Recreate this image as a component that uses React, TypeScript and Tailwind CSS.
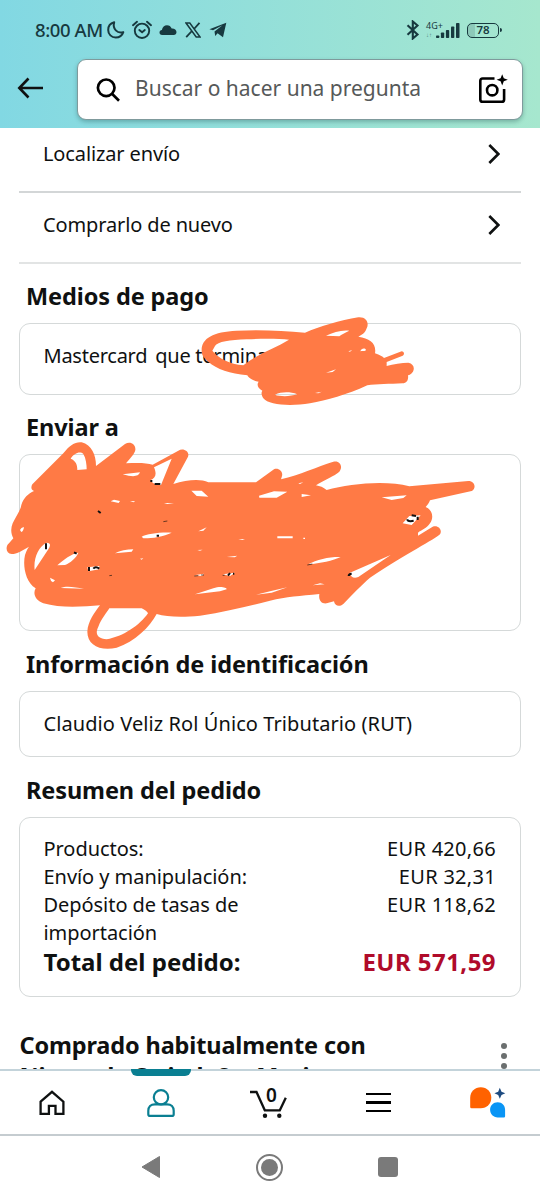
import React from 'react';

type IconProps = { className?: string };

const ACTIONS = [
  { label: 'Localizar envío', row: 'h-[65px] pb-[12px] border-b-2 border-[#d3d6d7]' },
  { label: 'Comprarlo de nuevo', row: 'h-[71px] pb-[6px] border-b-2 border-[#e2e4e4]' },
];

const SUMMARY = [
  { label: 'Productos:', amount: 'EUR 420,66' },
  { label: 'Envío y manipulación:', amount: 'EUR 32,31' },
  { label: 'Depósito de tasas de importación', amount: 'EUR 118,62' },
];

const MoonIcon = ({ className }: IconProps) => (
  <svg className={className} viewBox="0 0 18 18" fill="none" stroke="currentColor" strokeWidth="2" strokeLinejoin="round">
    <path d="M7.2 1.3C3.8 2.2 1.2 5.1 1.2 8.9c0 4.4 3.3 7.6 7.5 7.6 3.6 0 6.5-2.1 7.6-5.4-5.9 1.9-11-3.2-9.1-9.8z" />
  </svg>
);

const AlarmIcon = ({ className }: IconProps) => (
  <svg className={className} viewBox="0 0 20 20" fill="none" stroke="currentColor" strokeWidth="1.9" strokeLinecap="round">
    <circle cx="10" cy="10.8" r="7.2" />
    <path d="M1 5.2 5 1.8M19 5.2l-4-3.4M7.3 10l2.8 2.3 2.7-2.3" />
  </svg>
);

const CloudIcon = ({ className }: IconProps) => (
  <svg className={className} viewBox="0 0 18 12" fill="currentColor">
    <path d="M3.2 11C1.4 11 .5 9.8.5 8.5c0-1.500 1-2.500 2.400-2.600C3.400 3 5.400 1.200 8 1.200c2.200 0 3.900 1.200 4.700 3.300 2.700-.2 4.800 1.300 4.800 3.600 0 1.800-1.200 2.900-2.800 2.900z" />
  </svg>
);

const XIcon = ({ className }: IconProps) => (
  <svg className={className} viewBox="0 0 16 16" fill="none" stroke="currentColor">
    <path strokeWidth="1.5" d="M1 1h3.800l10.300 14h-3.900z" />
    <path strokeWidth="1.8" d="M14.500.8 9 7M6.900 9 1.200 15.200" />
  </svg>
);

const TelegramIcon = ({ className }: IconProps) => (
  <svg className={className} viewBox="0 0 18 16" fill="currentColor">
    <path d="M17.300.8 14 15.200 8.600 11.300 6.200 14 5.500 9.400 13.500 3.200 4 8.300.4 7.300z" />
  </svg>
);

const BluetoothIcon = ({ className }: IconProps) => (
  <svg className={className} viewBox="0 0 14 20" fill="none" stroke="currentColor" strokeWidth="2.100">
    <path d="m1.500 5.200 10 9.300-4.700 4V1.500l4.700 4-10 9.300" />
  </svg>
);

const SignalIcon = ({ className }: IconProps) => (
  <svg className={className} viewBox="0 0 24 16" fill="currentColor">
    <rect x="0" y="12.500" width="3.300" height="2.500" rx=".8" />
    <rect x="4.900" y="9.500" width="3.300" height="5.500" rx=".8" />
    <rect x="9.900" y="7" width="3.300" height="8" rx=".8" />
    <rect x="15" y="3.500" width="3.300" height="11.500" rx=".8" />
    <rect x="20" y="0" width="3.500" height="15" rx=".8" />
  </svg>
);

const BackIcon = ({ className }: IconProps) => (
  <svg className={className} viewBox="0 0 28 22" fill="none" stroke="currentColor" strokeWidth="2.600">
    <path d="M26 11H2.500M11.500 1.500 2.300 11l9.200 9.500" />
  </svg>
);

const SearchIcon = ({ className }: IconProps) => (
  <svg className={className} viewBox="0 0 24 24" fill="none" stroke="currentColor" strokeWidth="2.700">
    <circle cx="10.200" cy="9.800" r="8.300" />
    <path d="m16 15.700 7 7" />
  </svg>
);

const LensIcon = ({ className }: IconProps) => (
  <svg className={className} viewBox="0 0 30 30" fill="none" stroke="currentColor" strokeWidth="2.600">
    <path d="M16.500 4.500H4.600Q2.300 4.500 2.300 6.800v18.600q0 2.300 2.300 2.300h19.200q2.300 0 2.300-2.300V15" />
    <circle cx="14.200" cy="16.200" r="5.200" />
    <path stroke="none" fill="currentColor" d="M24.200.3 25.800 4.300 29.800 5.800 25.800 7.300 24.200 11.500 22.600 7.300 18.600 5.800 22.600 4.300z" />
  </svg>
);

const ChevronIcon = ({ className }: IconProps) => (
  <svg className={className} viewBox="0 0 12 20" fill="none" stroke="currentColor" strokeWidth="2.600">
    <path d="m1.300 1 9 9-9 9" />
  </svg>
);

const HomeIcon = ({ className }: IconProps) => (
  <svg className={className} viewBox="0 0 26 26" fill="none" stroke="currentColor" strokeWidth="2.300">
    <path d="M1.600 11.700 13 1.800l11.400 9.900v12.200h-7.900v-8H9.900v8H1.600z" />
  </svg>
);

const PersonIcon = ({ className }: IconProps) => (
  <svg className={className} viewBox="0 0 28 28" fill="none" stroke="currentColor" strokeWidth="2.200">
    <circle cx="14" cy="8.300" r="7.200" />
    <path d="M7.800 15.300h12.400c4 0 6.500 2.600 6.500 6.500v3.400q0 1.700-1.700 1.700H3q-1.700 0-1.700-1.700v-3.400c0-3.900 2.500-6.500 6.500-6.500z" />
  </svg>
);

const CartIcon = ({ className }: IconProps) => (
  <svg className={className} viewBox="0 0 38 30" fill="none" stroke="currentColor" strokeWidth="2.300">
    <path d="M0 4h6.500l8.300 18.300h15l6-12.500" />
    <circle cx="15" cy="27.700" r="2.200" fill="currentColor" stroke="none" />
    <circle cx="29.300" cy="27.700" r="2.200" fill="currentColor" stroke="none" />
  </svg>
);

const AssistantIcon = ({ className }: IconProps) => (
  <svg className={className} viewBox="0 0 36 31">
    <path fill="#ff6200" d="M10.800.3c6 0 10.500 4.500 10.500 10.500 0 6-4.500 10.500-10.500 10.500H1.500Q.2 21.300.2 20V10.800C.2 4.800 4.800.3 10.800.3z" />
    <path fill="#0a95f5" d="M27.700 15.200c4.400 0 7.400 3.200 7.400 7.500v6.500q0 1.200-1.200 1.200h-6.200c-4.400 0-7.600-3.300-7.600-7.600s3.200-7.600 7.600-7.600z" />
    <path fill="#1d4b80" d="M29.800.8 31.500 4.700 35.300 6.300 31.500 7.900 29.800 11.800 28.200 7.900 24.400 6.300 28.200 4.700z" />
  </svg>
);

// Marker strokes hiding the card number
const CardScribble = ({ className }: IconProps) => (
  <svg className={className} viewBox="0 0 780 360">
    <path
      fill="#ff7a45"
      fillRule="evenodd"
      d="M65 150C65 115 100 95 170 92C240 88 310 92 375 98C420 80 480 60 535 52C560 50 568 70 560 85C555 100 545 105 535 110C570 115 590 130 585 160C600 165 608 170 612 174L665 154C672 154 675 163 668 167L620 186V198C640 192 665 188 685 188C708 192 706 220 684 226C686 240 680 250 668 250C630 252 590 252 562 256C500 285 440 300 390 310C330 320 265 315 250 295C244 285 243 278 247 272C232 265 230 252 236 245C215 242 205 232 202 226C150 220 110 208 85 185C68 170 65 165 65 150Z
      M105 138C112 125 150 120 200 118C250 115 300 116 327 119C285 145 235 160 190 196C150 192 115 175 97 152Z
      M438 107C460 97 485 89 508 92C495 98 484 104 478 109Z
      M541 154C543 145 555 142 558 150C555 155 548 151 541 154Z
      M438 218L468 208L458 216Z M505 154L517 150L510 155Z M405 279L425 275L415 280Z
      M285 284C305 275 330 275 352 283C330 290 300 290 285 284Z"
    />
  </svg>
);

// Marker strokes hiding the shipping address
const AddressScribble = ({ className }: IconProps) => (
  <svg className={className} viewBox="0 0 1620 690">
    <path
      fill="#ff7a45"
      fillRule="evenodd"
      d="M97 163L190 70C210 45 225 35 245 37C275 45 288 75 288 108L375 42C390 32 408 42 406 60C404 72 390 85 378 100C410 98 440 98 458 104L535 62C550 52 570 65 564 80L520 162C560 150 600 145 625 157L768 157L822 118C835 112 850 125 846 138L843 148C900 135 950 110 1000 95C1020 90 1030 110 1018 125C1005 138 970 150 948 166C960 168 970 172 980 180C1050 160 1160 150 1228 169L1405 153C1425 153 1430 175 1415 183L1290 211C1287 220 1282 225 1277 231C1298 240 1302 262 1290 280C1280 295 1265 300 1254 308V317L1298 290C1315 284 1328 300 1320 313C1305 328 1220 370 1110 443C1085 465 1055 495 1030 522C1018 532 1004 528 1002 514L980 520C965 522 955 512 958 492C900 498 860 500 810 512C750 528 680 545 600 557C540 563 500 560 470 552C450 590 405 635 350 653C300 664 262 645 262 605C263 575 285 545 300 526C250 530 180 535 130 520C105 510 98 490 107 475C75 455 68 405 75 375C80 360 85 352 87 350C70 360 50 372 35 372C18 370 15 350 27 340L40 325C32 310 32 295 38 280C50 255 62 240 64 225C70 205 85 190 102 183C92 178 93 170 97 163Z
      M212 86C222 70 240 62 250 72C258 85 260 105 260 118L232 120C232 105 228 92 212 86Z
      M368 133L420 127C415 140 400 142 368 133Z
      M462 112L515 86L483 165C465 165 455 158 452 150C465 145 472 135 462 112Z
      M574 182H605L625 200L590 198Z M777 197L822 184L862 185L830 203H778Z M905 192L933 196L905 201Z M895 160L910 157L900 162Z
      M1145 202L1220 196L1210 204L1175 210Z M1208 280L1228 258L1262 256L1235 285Z
      M332 214L342 209L360 213L356 219Z M390 213L406 214L400 217Z M492 219H522L502 222Z
      M425 320C440 312 480 306 515 308C490 320 450 326 430 325Z M345 370C360 362 380 358 400 358L395 365Z
      M172 406C190 390 215 370 235 368C230 382 210 400 195 405Z M104 420C100 385 115 350 140 338C155 338 150 350 145 358Z
      M262 412L298 408V418L265 424Z M60 300Q65 290 72 292Q70 304 64 306Z M150 443L165 451L159 457Q151 453 150 443Z
      M182 474C200 466 225 472 252 476Z M585 493L640 475C660 468 680 472 680 478L660 484Z
      M680 381L712 377L704 382Z M592 360L608 359L600 362Z M668 433L705 428L690 438Z M582 436L612 431L606 438Z
      M832 319H878V325H832Z M910 323H915V327H910Z M768 494L810 484L862 472L815 488Z
      M925 403C950 388 990 380 1022 381C1000 392 960 400 925 403Z M1050 428L1172 375L1075 441C1060 447 1052 440 1050 428Z
      M938 466L960 460L974 463Z M595 304L620 292L610 302Z M715 328L735 327L727 330Z M420 386L430 385L425 389Z
      M328 535L425 535C435 540 442 545 444 550C420 585 370 620 320 628C290 625 285 610 295 590C305 565 320 548 328 535Z"
    />
    <path
      fill="none"
      stroke="#111"
      strokeWidth="6"
      d="M138 340V358M267 411V423M280 416Q287 408 298 416M464 162H481M454 150V156M294 243L302 249M470 317H477M222 367L230 371M684 437L690 429M699 431H703M1222 268Q1222 274 1232 274L1241 272M1235 256L1248 258M1253 260V270M1046 438Q1046 432 1055 431"
    />
    <path fill="none" stroke="#4a2a1a" strokeWidth="2.500" d="M490 275L502 273M328 437L336 436M583 438L595 437M603 435H612M668 436H674M922 405L937 402" />
  </svg>
);

const SectionTitle = ({ className, children }: { className?: string; children: React.ReactNode }) => (
  <h2 className={`pl-[7px] text-[23.5px] leading-[30px] font-bold tracking-[-0.11px] whitespace-nowrap ${className ?? ''}`}>{children}</h2>
);

const Card = ({ className, children }: { className?: string; children?: React.ReactNode }) => (
  <section className={`relative rounded-[11px] border border-[#d5d9d9] pl-[23.5px] pr-6 ${className ?? ''}`}>{children}</section>
);

const StatusBar = () => (
  <div className="flex h-[60px] items-center pl-[35px] pr-[38px] text-[#17393f]">
    <span className="w-[71px] text-[18.5px] leading-6 font-medium tracking-[-0.4px] whitespace-nowrap">8:00 AM</span>
    <MoonIcon className="ml-[1px] h-[18px] w-[18px]" />
    <AlarmIcon className="ml-[7px] h-5 w-5" />
    <CloudIcon className="ml-[7px] h-3 w-[18px]" />
    <XIcon className="ml-[8px] h-4 w-4" />
    <TelegramIcon className="ml-[8px] h-4 w-[18px]" />
    <BluetoothIcon className="ml-auto h-5 w-[14px]" />
    <div className="ml-[6px] flex h-[18px] w-[10px] flex-col justify-between">
      <span className="text-[9px] leading-[9px] whitespace-nowrap">4G+</span>
      <span className="text-[6px] leading-[7px] opacity-60">↓↑</span>
    </div>
    <SignalIcon className="mt-[1px] h-4 w-6" />
    <div className="ml-[7px] flex h-[15px] w-8 items-center justify-center rounded-[5px] border-[1.5px] border-current bg-gradient-to-r from-[#8dc9b9] from-25% to-transparent to-25% text-[11.5px] leading-3 font-semibold">
      78
    </div>
    <div className="ml-[1px] h-1 w-0.5 rounded-r bg-current" />
  </div>
);

const Header = () => (
  <header className="h-[128px] shrink-0 bg-gradient-to-r from-[#82d8e3] to-[#a6e7ce]">
    <StatusBar />
    <div className="mt-[-1px] flex items-center pl-[17px] pr-[17px]">
      <BackIcon className="mt-[-4px] h-[22px] w-7 text-[#0f1111]" />
      <div className="ml-8 flex h-[61px] flex-1 items-center rounded-[9px] border border-[#7f9a9c] bg-white pl-[18px] pr-[14px] shadow-[0_2px_4px_rgba(15,60,60,0.3)]">
        <SearchIcon className="h-6 w-6 text-black" />
        <span className="ml-[15px] mt-[-1px] text-[21px] whitespace-nowrap text-[#565959]">Buscar o hacer una pregunta</span>
        <LensIcon className="ml-auto mt-[-1px] h-[30px] w-[30px] text-black" />
      </div>
    </div>
  </header>
);

const TabBar = () => (
  <nav className="relative flex h-[67px] shrink-0 items-center border-t-2 border-b-2 border-t-[#c3d3da] border-b-[#c5ccd0] bg-white">
    <div className="absolute left-[131px] top-[-2px] h-[7px] w-[60px] rounded-b-[6px] bg-[#0a7f92]" />
    <HomeIcon className="ml-[39px] h-[26px] w-[26px] text-[#0f1111]" />
    <PersonIcon className="ml-[82px] h-7 w-7 text-[#0a7f92]" />
    <div className="relative ml-[75px] h-[30px] w-[38px]">
      <CartIcon className="h-[30px] w-[38px]" />
      <span className="absolute left-[16px] top-[-1px] text-[19px] leading-4 font-semibold">0</span>
    </div>
    <div className="ml-[78px] flex w-[25px] flex-col gap-[6px]">
      <div className="h-[2.5px] bg-black" />
      <div className="h-[2.5px] bg-black" />
      <div className="h-[2.5px] bg-black" />
    </div>
    <AssistantIcon className="ml-[79px] h-[31px] w-9" />
  </nav>
);

const SystemBar = () => (
  <div className="flex h-[64px] shrink-0 items-center justify-center bg-white pr-[2px] pb-[2px] text-[#7a7a7a]">
    <svg className="h-6 w-5" viewBox="0 0 20 24" fill="currentColor" stroke="currentColor" strokeLinejoin="round">
      <path d="M18.500 1.500v21L1 12z" />
    </svg>
    <div className="ml-[95px] flex h-[27px] w-[27px] items-center justify-center rounded-full border-2 border-current">
      <div className="h-[17px] w-[17px] rounded-full bg-current" />
    </div>
    <div className="ml-[95px] h-5 w-5 rounded-[3px] bg-current" />
  </div>
);

const App = () => (
  <div className="flex h-[1200px] w-[540px] flex-col overflow-hidden bg-white font-['Noto_Sans','Open_Sans',sans-serif] text-[#0f1111]">
    <Header />
    <main className="flex h-[941px] shrink-0 flex-col overflow-hidden px-[19px] text-[20px] leading-[28px]">
      {ACTIONS.map(action => (
        <div key={action.label} className={`flex shrink-0 items-center justify-between pl-6 pr-[21px] ${action.row}`}>
          <span className="tracking-[-0.13px]">{action.label}</span>
          <ChevronIcon className="h-5 w-3" />
        </div>
      ))}

      <SectionTitle className="mt-[17px]">Medios de pago</SectionTitle>
      <Card className="mt-[12px] h-[72px] shrink-0 pt-[18px]">
        <p className="tracking-[-0.25px] whitespace-nowrap"><span className="mr-[3px]">Mastercard</span> que termina en</p>
        <CardScribble className="absolute left-[160px] top-[-24px] h-[120px] w-[260px]" />
      </Card>

      <SectionTitle className="mt-[17px]">Enviar a</SectionTitle>
      <Card className="mt-[12px] h-[177px] shrink-0">
        <AddressScribble className="absolute left-[-20px] top-[-25px] h-[230px] w-[540px]" />
      </Card>

      <SectionTitle className="mt-[18px]">Información de identificación</SectionTitle>
      <Card className="mt-[12px] h-[66px] shrink-0 pt-[18px]">
        <p className="tracking-[0.08px] whitespace-nowrap">Claudio Veliz Rol Único Tributario (RUT)</p>
      </Card>

      <SectionTitle className="mt-[18px]">Resumen del pedido</SectionTitle>
      <Card className="mt-[12px] h-[180px] shrink-0 pt-[17px]">
        {SUMMARY.map(line => (
          <div key={line.label} className="flex justify-between">
            <span className="w-[230px] tracking-[-0.05px]">{line.label}</span>
            <span className="tracking-[0.3px] whitespace-nowrap">{line.amount}</span>
          </div>
        ))}
        <div className="flex justify-between text-[24px] leading-[30px] font-bold">
          <span>Total del pedido:</span>
          <span className="tracking-[0.45px] text-[#b00b2a]">EUR 571,59</span>
        </div>
      </Card>

      <div className="mt-[33px] flex shrink-0 justify-between pl-[0.5px]">
        <h2 className="w-[400px] text-[23.5px] leading-[31px] font-bold tracking-[-0.14px]">Comprado habitualmente con Nintendo Switch 2 + Mario</h2>
        <div className="mr-[14px] mt-[13px] flex flex-col gap-1 text-[#6b6f6f]">
          <div className="h-[6px] w-[6px] rounded-full bg-current" />
          <div className="h-[6px] w-[6px] rounded-full bg-current" />
          <div className="h-[6px] w-[6px] rounded-full bg-current" />
        </div>
      </div>
    </main>
    <TabBar />
    <SystemBar />
  </div>
);

export default App;
